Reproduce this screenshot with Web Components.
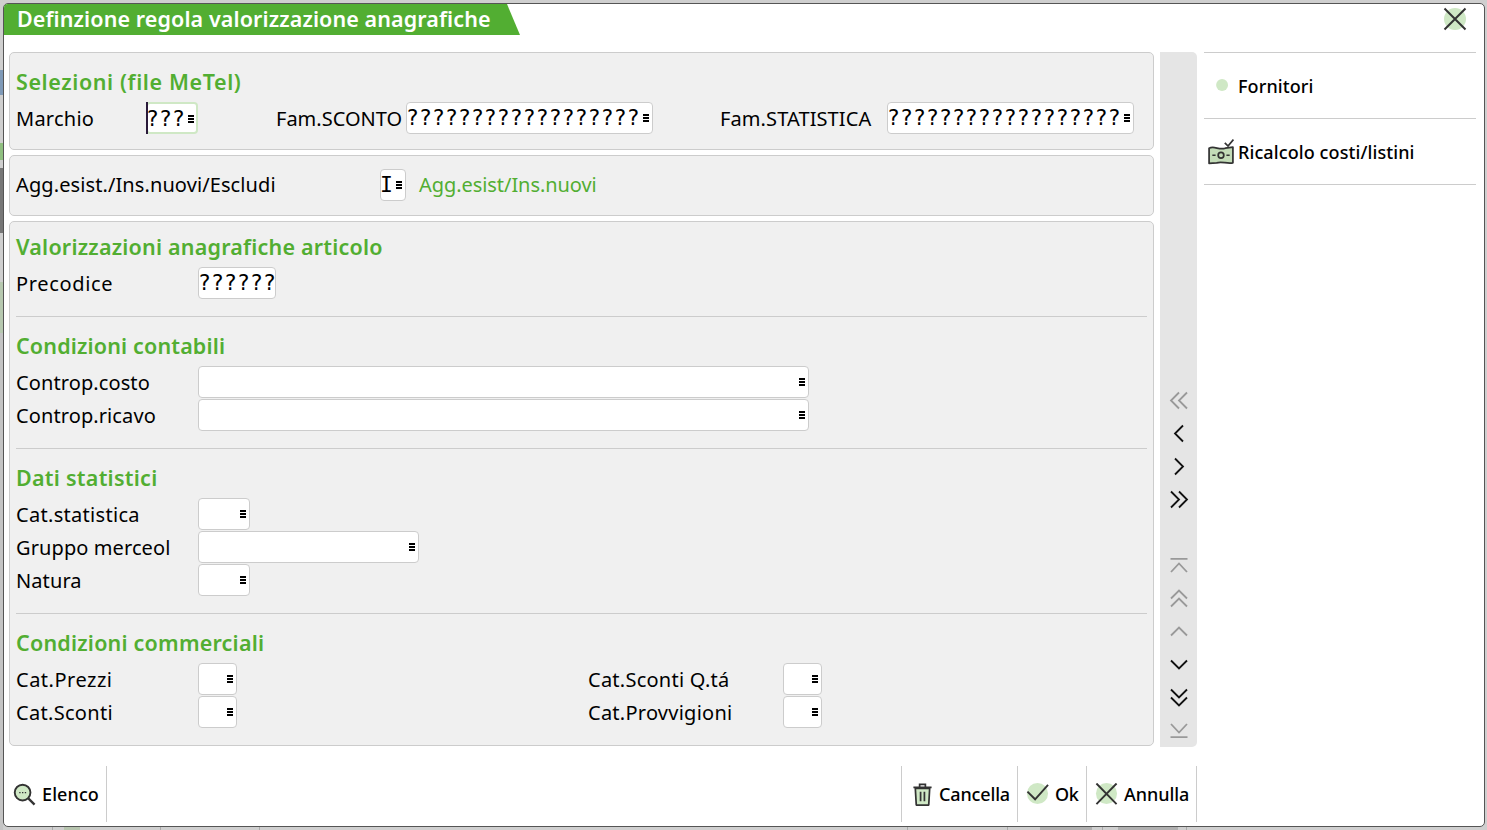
<!DOCTYPE html>
<html lang="it">
<head>
<meta charset="utf-8">
<title>Definzione regola valorizzazione anagrafiche</title>
<style>
  html, body { margin: 0; height: 100%; overflow: hidden; }
  body {
    box-sizing: border-box;
    width: 1487px;
    height: 830px;
    padding: 3px 2px 3px 3px;
    background-color: #cfcfcf;
    /* what shows of the page behind the dialog */
    background-image:
      linear-gradient(#cfcfcf 0 70px, #7f9ab8 70px 95px, #cfcfcf 95px 143px, #8fbf80 143px 160px, #cfcfcf 160px 168px, #777 168px 233px, #cfcfcf 233px 282px, #b7c9b0 282px 333px, #c4c4c4 333px),
      linear-gradient(#aaa, #aaa), linear-gradient(#aaa, #aaa), linear-gradient(#aaa, #aaa),
      linear-gradient(#aaa, #aaa), linear-gradient(#aaa, #aaa), linear-gradient(#aaa, #aaa), linear-gradient(#aaa, #aaa),
      linear-gradient(#b6c4ae, #b6c4ae), linear-gradient(#b0b0b0, #b0b0b0), linear-gradient(#b0b0b0, #b0b0b0);
    background-repeat: no-repeat;
    background-size: 3px 100%, 1px 3px, 1px 3px, 1px 3px, 1px 3px, 1px 3px, 1px 3px, 1px 3px, 16px 3px, 52px 3px, 60px 3px;
    background-position: 0 0, 52px 827px, 160px 827px, 259px 827px, 907px 827px, 1007px 827px, 1102px 827px, 1186px 827px, 64px 827px, 1040px 827px, 1118px 827px;
    font-family: "Noto Sans", sans-serif;
    font-size: 20px;
    letter-spacing: .1px;
    color: #000;
  }
</style>
</head>
<body>
<app-window title="Definzione regola valorizzazione anagrafiche">

  <form-panel style="height:98px" slot="main">
    <panel-heading style="letter-spacing:.6px">Selezioni (file MeTel)</panel-heading>
    <form-row>
      <form-label width="130" style="letter-spacing:.25px">Marchio</form-label>
      <form-field width="52" value="???" menu focused></form-field>
      <form-label width="130" style="margin-left:78px;letter-spacing:0">Fam.SCONTO</form-label>
      <form-field width="247" value="??????????????????" menu></form-field>
      <form-label width="167" style="margin-left:67px">Fam.STATISTICA</form-label>
      <form-field width="247" value="??????????????????" menu></form-field>
    </form-row>
  </form-panel>

  <form-panel style="height:61px;margin-top:5px" slot="main">
    <form-row style="margin-top:-1px">
      <form-label width="364">Agg.esist./Ins.nuovi/Escludi</form-label>
      <form-field width="26" value="I" menu></form-field>
      <form-label width="300" style="margin-left:13px;color:#52ae32;letter-spacing:-.06px">Agg.esist/Ins.nuovi</form-label>
    </form-row>
  </form-panel>

  <form-panel style="height:525px;margin-top:5px;padding-top:9px" slot="main">
    <panel-heading>Valorizzazioni anagrafiche articolo</panel-heading>
    <form-row>
      <form-label width="182" style="letter-spacing:.65px">Precodice</form-label>
      <form-field width="78" value="??????"></form-field>
    </form-row>
    <panel-rule></panel-rule>

    <panel-heading style="letter-spacing:.15px">Condizioni contabili</panel-heading>
    <form-row>
      <form-label width="182">Controp.costo</form-label>
      <form-field width="611" menu></form-field>
    </form-row>
    <form-row>
      <form-label width="182">Controp.ricavo</form-label>
      <form-field width="611" menu></form-field>
    </form-row>
    <panel-rule></panel-rule>

    <panel-heading style="letter-spacing:.25px">Dati statistici</panel-heading>
    <form-row>
      <form-label width="182" style="letter-spacing:.3px">Cat.statistica</form-label>
      <form-field width="52" menu></form-field>
    </form-row>
    <form-row>
      <form-label width="182">Gruppo merceol</form-label>
      <form-field width="221" menu></form-field>
    </form-row>
    <form-row>
      <form-label width="182">Natura</form-label>
      <form-field width="52" menu></form-field>
    </form-row>
    <panel-rule></panel-rule>

    <panel-heading>Condizioni commerciali</panel-heading>
    <form-row>
      <form-label width="182" style="letter-spacing:.5px">Cat.Prezzi</form-label>
      <form-field width="39" menu></form-field>
      <form-label width="195" style="margin-left:351px;letter-spacing:.25px">Cat.Sconti Q.tá</form-label>
      <form-field width="39" menu></form-field>
    </form-row>
    <form-row>
      <form-label width="182" style="letter-spacing:.3px">Cat.Sconti</form-label>
      <form-field width="39" menu></form-field>
      <form-label width="195" style="margin-left:351px;letter-spacing:.25px">Cat.Provvigioni</form-label>
      <form-field width="39" menu></form-field>
    </form-row>
  </form-panel>

  <nav-strip slot="nav"></nav-strip>

  <side-item slot="side" icon="dot">Fornitori</side-item>
  <side-item slot="side" icon="money">Ricalcolo costi/listini</side-item>

  <tool-button slot="tools-left" icon="search" pad="9" gap="6">Elenco</tool-button>
  <tool-button slot="tools-right" icon="trash" pad="9" gap="5" width="116" style="letter-spacing:-.15px">Cancella</tool-button>
  <tool-button slot="tools-right" icon="ok" pad="8" gap="6" width="69" style="letter-spacing:-.3px">Ok</tool-button>
  <tool-button slot="tools-right" icon="cancel" pad="8" gap="6" width="110" style="letter-spacing:-.05px">Annulla</tool-button>
</app-window>

<script>
// Shared icons, drawn for a 24x24 box
const ICONS = {
  dot: '<circle cx="13" cy="11" r="5.5" fill="#cfe8c5"/>',
  close: '<circle cx="12" cy="12" r="11" fill="#cfe8c5"/><path d="M1.5 1.5 22.5 22.5M22.5 1.5 1.5 22.5" stroke="#333" stroke-width="2" fill="none"/>',
  cancel: '<circle cx="12" cy="11" r="11" fill="#cfe8c5"/><path d="M1.5 .5 22.5 22M22.5 .5 1.5 22" stroke="#333" stroke-width="2" fill="none"/>',
  ok: '<circle cx="12" cy="11" r="11" fill="#cfe8c5"/><path d="M1.5 9 9.5 17 23 2" stroke="#333" stroke-width="2" fill="none"/>',
  trash: '<path d="M4.5 5.5h15l-1 17.5h-13z" fill="#cfe8c5" stroke="#333" stroke-width="1.8" stroke-linejoin="round"/><path d="M2.5 4.5h19M9 4V1.5h6V4M10 9v10M14 9v10" stroke="#333" stroke-width="1.8" fill="none"/>',
  search: '<circle cx="10" cy="10" r="8.2" fill="#cfe8c5" stroke="#333" stroke-width="2"/><path d="M16 16 22.5 22.5" stroke="#333" stroke-width="2.4"/><path d="M6.5 10h1.4M9.4 10h1.4M12.3 10h1.4" stroke="#333" stroke-width="1.3"/>',
  money: '<path d="M1 8.5c5-2.5 9 2 15 0l7-1V22c-6 1-10-1.5-15 0l-7 .5z" fill="#c3dcb8" stroke="#333" stroke-width="1.6" stroke-linejoin="round"/><circle cx="12" cy="15" r="2.6" fill="none" stroke="#333" stroke-width="1.6"/><path d="M4 15h3M17 15h3" stroke="#333" stroke-width="1.6"/><path d="M15.5 3.5l3 3 5-6" stroke="#333" stroke-width="1.6" fill="none"/>'
};

// Navigation glyphs in a 24x24 box. true = enabled (black), false = disabled (grey)
const NAV = [
  ['M12 4 4 12l8 8M20 4l-8 8 8 8', false],
  ['M16 4 8 12l8 8', true],
  ['M8 4l8 8-8 8', true],
  ['M4 4l8 8-8 8M12 4l8 8-8 8', true],
  null,
  ['M3.5 5.3h17M4 18.5 12 10l8 8.5', false],
  ['M4 12l8-8 8 8M4 20l8-8 8 8', false],
  ['M4 16l8-8 8 8', false],
  ['M4 8l8 8 8-8', true],
  ['M4 4l8 8 8-8M4 12l8 8 8-8', true],
  ['M4 5.5l8 8.5 8-8.5M3.5 18.7h17', false]
];

class AppWindow extends HTMLElement {
  connectedCallback() {
    const title = this.getAttribute('title') || '';
    this.attachShadow({ mode: 'open' }).innerHTML = `
      <style>
        :host {
          display: flex;
          flex-direction: column;
          box-sizing: border-box;
          height: 100%;
          background: #fff;
          border: 1px solid #555;
          border-radius: 5px;
          overflow: hidden;
        }
        .top { display: flex; justify-content: space-between; height: 31px; flex: none; }
        .ribbon {
          width: 516px;
          color: #fff;
          background: #52ae32;
          font-size: 21.5px;
          font-weight: 600;
          line-height: 30px;
          padding-left: 13px;
          box-sizing: border-box;
          white-space: nowrap;
          clip-path: polygon(0 0, 503px 0, 100% 100%, 0 100%);
        }
        .close { width: 24px; height: 24px; margin: 3px 17px 0 0; }
        .body { display: flex; margin: 17px 0 0 5px; height: 695px; flex: none; }
        .form { width: 1145px; display: flex; flex-direction: column; flex: none; }
        .nav { margin-left: 6px; display: flex; }
        .side { margin-left: 7px; width: 272px; border-top: 1px solid #ccc; flex: none; }
        .tools { display: flex; justify-content: space-between; margin-top: 19px; height: 56px; flex: none; padding-right: 287px; }
        .tools div { display: flex; }
        .tools .right { border-left: 1px solid #ccc; }
      </style>
      <div class="top">
        <div class="ribbon">${title}</div>
        <svg class="close" viewBox="0 0 24 24">${ICONS.close}</svg>
      </div>
      <div class="body">
        <div class="form"><slot name="main"></slot></div>
        <div class="nav"><slot name="nav"></slot></div>
        <div class="side"><slot name="side"></slot></div>
      </div>
      <div class="tools">
        <div><slot name="tools-left"></slot></div>
        <div class="right"><slot name="tools-right"></slot></div>
      </div>`;
  }
}

class FormPanel extends HTMLElement {
  connectedCallback() {
    this.attachShadow({ mode: 'open' }).innerHTML = `
      <style>
        :host {
          display: block;
          box-sizing: border-box;
          flex: none;
          background: #f0f0f0;
          border: 1px solid #ccc;
          border-radius: 5px;
          padding: 13px 6px 0;
        }
      </style>
      <slot></slot>`;
  }
}

class PanelHeading extends HTMLElement {
  connectedCallback() {
    this.attachShadow({ mode: 'open' }).innerHTML = `
      <style>
        :host {
          display: block;
          height: 33px;
          margin-bottom: 2.5px;
          color: #52ae32;
          font-size: 21.5px;
          font-weight: 600;
          letter-spacing: .2px;
          line-height: 31px;
        }
      </style>
      <slot></slot>`;
  }
}

class PanelRule extends HTMLElement {
  connectedCallback() {
    this.attachShadow({ mode: 'open' }).innerHTML = `
      <style>
        :host { display: block; height: 1px; background: #ccc; margin: 16px 0 13.5px; }
      </style>`;
  }
}

class FormRow extends HTMLElement {
  connectedCallback() {
    this.attachShadow({ mode: 'open' }).innerHTML = `
      <style>
        :host { display: flex; align-items: center; height: 33px; }
      </style>
      <slot></slot>`;
  }
}

class FormLabel extends HTMLElement {
  connectedCallback() {
    const w = this.getAttribute('width');
    this.attachShadow({ mode: 'open' }).innerHTML = `
      <style>
        :host { display: block; flex: none; width: ${w}px; white-space: nowrap; }
      </style>
      <slot></slot>`;
  }
}

class FormField extends HTMLElement {
  connectedCallback() {
    const w = this.getAttribute('width');
    const value = this.getAttribute('value') || '';
    const menu = this.hasAttribute('menu') ? '<i></i>' : '';
    const focused = this.hasAttribute('focused');
    this.attachShadow({ mode: 'open' }).innerHTML = `
      <style>
        :host {
          display: block;
          position: relative;
          flex: none;
          box-sizing: border-box;
          width: ${w}px;
          height: 32px;
          background: #fff;
          border: ${focused ? '2px solid #cfe8c5' : '1px solid #ccc'};
          border-radius: 4px;
          font-family: "DejaVu Sans Mono", monospace;
          font-size: 21.4px;
          letter-spacing: .1px;
          line-height: 30px;
          white-space: nowrap;
        }
        b {
          position: absolute;
          left: -2px;
          top: -2px;
          width: 2px;
          height: 32px;
          background: #2a1a3a;
        }
        span { margin-left: ${focused ? -2 : -1}px; }
        i {
          position: absolute;
          right: ${focused ? 2 : 3}px;
          top: 11px;
          width: 6px;
          height: 8px;
          background: repeating-linear-gradient(#000 0 2px, transparent 2px 3px);
        }
      </style>
      ${focused ? '<b></b>' : ''}<span>${value}</span>${menu}`;
  }
}

class NavStrip extends HTMLElement {
  connectedCallback() {
    const buttons = NAV.map(item => item
      ? `<svg viewBox="0 0 24 24"><path d="${item[0]}" stroke="${item[1] ? '#111' : '#999'}" stroke-width="1.8" fill="none"/></svg>`
      : '<div></div>').join('');
    this.attachShadow({ mode: 'open' }).innerHTML = `
      <style>
        :host {
          display: flex;
          flex-direction: column;
          justify-content: flex-end;
          align-items: center;
          box-sizing: border-box;
          width: 37px;
          height: 695px;
          background: #e5e5e5;
          border-radius: 0 5px 5px 0;
          padding-bottom: 0.5px;
        }
        svg { width: 24px; height: 24px; padding: 4.5px 0; flex: none; }
        div { height: 33px; flex: none; }
      </style>
      ${buttons}`;
  }
}

class SideItem extends HTMLElement {
  connectedCallback() {
    const icon = this.getAttribute('icon');
    this.attachShadow({ mode: 'open' }).innerHTML = `
      <style>
        :host {
          display: flex;
          align-items: center;
          box-sizing: border-box;
          height: 66px;
          border-bottom: 1px solid #ccc;
          padding-left: 4px;
          font-size: 18px;
          font-weight: 500;
        }
        svg { width: 26px; height: 26px; margin-right: 4px; flex: none; }
      </style>
      <svg viewBox="0 0 24 24">${ICONS[icon]}</svg><slot></slot>`;
  }
}

class ToolButton extends HTMLElement {
  connectedCallback() {
    const icon = this.getAttribute('icon');
    const pad = this.getAttribute('pad');
    const gap = this.getAttribute('gap');
    const w = this.getAttribute('width');
    this.attachShadow({ mode: 'open' }).innerHTML = `
      <style>
        :host {
          display: flex;
          align-items: center;
          box-sizing: border-box;
          ${w ? `width: ${w}px;` : ''}
          height: 56px;
          border-right: 1px solid #ccc;
          padding: 0 7px 0 ${pad}px;
          font-size: 18px;
          font-weight: 500;
        }
        svg { width: 23px; height: 23px; margin-right: ${gap}px; flex: none; }
      </style>
      <svg viewBox="0 0 24 24">${ICONS[icon]}</svg><slot></slot>`;
  }
}

customElements.define('app-window', AppWindow);
customElements.define('form-panel', FormPanel);
customElements.define('panel-heading', PanelHeading);
customElements.define('panel-rule', PanelRule);
customElements.define('form-row', FormRow);
customElements.define('form-label', FormLabel);
customElements.define('form-field', FormField);
customElements.define('nav-strip', NavStrip);
customElements.define('side-item', SideItem);
customElements.define('tool-button', ToolButton);
</script>
</body>
</html>
